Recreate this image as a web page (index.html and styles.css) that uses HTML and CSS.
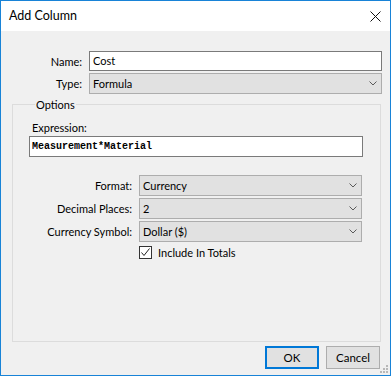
FILE: index.html
```html
<!DOCTYPE html>
<html lang="en">
<head>
    <meta charset="UTF-8">
    <meta name="viewport" content="width=device-width, initial-scale=1.0">
    <title>Add Column</title>
    <link rel="stylesheet" href="styles.css">
</head>
<body>
    <div class="window">
        <div class="titlebar">
            <span class="title">Add Column</span>
            <svg class="close" width="11" height="11" viewBox="0 0 11 11">
                <path d="M0.5 0.5 L10.5 10.5 M10.5 0.5 L0.5 10.5" stroke="#111" stroke-width="1" fill="none"/>
            </svg>
        </div>

        <div class="content">
            <div class="field-row">
                <label class="field-label">Name:</label>
                <div class="textbox wide">Cost</div>
            </div>
            <div class="field-row">
                <label class="field-label">Type:</label>
                <div class="combo wide">
                    <span>Formula</span>
                    <svg class="chevron" width="8" height="5" viewBox="0 0 8 5"><path d="M0.5 0.5 L4 4 L7.5 0.5" stroke="#5a5a5a" fill="none"/></svg>
                </div>
            </div>

            <fieldset class="options">
                <legend>Options</legend>
                <div class="expr-label">Expression:</div>
                <div class="textbox mono">Measurement*Material</div>

                <div class="opt-grid">
                    <label class="opt-label">Format:</label>
                    <div class="combo">
                        <span>Currency</span>
                        <svg class="chevron" width="8" height="5" viewBox="0 0 8 5"><path d="M0.5 0.5 L4 4 L7.5 0.5" stroke="#5a5a5a" fill="none"/></svg>
                    </div>
                    <label class="opt-label">Decimal Places:</label>
                    <div class="combo">
                        <span>2</span>
                        <svg class="chevron" width="8" height="5" viewBox="0 0 8 5"><path d="M0.5 0.5 L4 4 L7.5 0.5" stroke="#5a5a5a" fill="none"/></svg>
                    </div>
                    <label class="opt-label">Currency Symbol:</label>
                    <div class="combo">
                        <span>Dollar ($)</span>
                        <svg class="chevron" width="8" height="5" viewBox="0 0 8 5"><path d="M0.5 0.5 L4 4 L7.5 0.5" stroke="#5a5a5a" fill="none"/></svg>
                    </div>
                    <span></span>
                    <div class="check-row">
                        <span class="checkbox">
                            <svg width="11" height="11" viewBox="0 0 11 11"><path d="M1.5 5.5 L4 8.5 L9.5 1.5" stroke="#222" stroke-width="1" fill="none"/></svg>
                        </span>
                        <span>Include In Totals</span>
                    </div>
                </div>
            </fieldset>

            <div class="buttons">
                <button class="btn default">OK</button>
                <button class="btn">Cancel</button>
            </div>
        </div>

        <svg class="grip" width="9" height="9" viewBox="0 0 9 9">
            <rect x="6" y="0" width="2" height="2" fill="#b8b8b8"/>
            <rect x="3" y="3" width="2" height="2" fill="#b8b8b8"/>
            <rect x="6" y="3" width="2" height="2" fill="#b8b8b8"/>
            <rect x="0" y="6" width="2" height="2" fill="#b8b8b8"/>
            <rect x="3" y="6" width="2" height="2" fill="#b8b8b8"/>
            <rect x="6" y="6" width="2" height="2" fill="#b8b8b8"/>
        </svg>
    </div>
</body>
</html>
```

FILE: styles.css
```css
* {
    box-sizing: border-box;
}
body {
    margin: 0;
    font-family: Lato, "Noto Sans", sans-serif;
    font-size: 11px;
    color: #000;
}
.window {
    position: relative;
    width: 391px;
    height: 376px;
    border: 1px solid #1883d7;
    background: #f0f0f0;
    display: flex;
    flex-direction: column;
}
.titlebar {
    height: 30px;
    background: #fff;
    display: flex;
    align-items: center;
    justify-content: space-between;
    padding: 0 9px 0 8px;
}
.title {
    font-size: 12.5px;
    margin-top: -1px;
}
.content {
    flex: 1;
    padding: 20px 0 0 11px;
}
.field-row {
    display: flex;
    align-items: center;
    margin-bottom: 2px;
}
.field-row + .field-row {
    margin-top: 1px;
}
.field-label {
    width: 70px;
    text-align: right;
    margin-right: 7px;
}
.textbox {
    height: 20px;
    border: 1px solid #7a7a7a;
    background: #fff;
    padding: 0 3px;
    line-height: 18px;
}
.combo {
    height: 21px;
    border: 1px solid #adadad;
    background: #e1e1e1;
    padding: 0 4px 0 3px;
    display: flex;
    align-items: center;
    justify-content: space-between;
}
.wide {
    width: 293px;
}
.options {
    width: 369px;
    margin: 3px 0 0 0;
    padding: 0 17px 0 16px;
    height: 245px;
    border: 1px solid #dcdcdc;
}
.options legend {
    margin-left: 6px;
    padding: 0 1px;
    line-height: 15px;
}
.expr-label {
    margin: 8px 0 0 3px;
    line-height: 16px;
}
.mono {
    height: 21px;
    font-family: "Liberation Mono", monospace;
    font-weight: bold;
    font-size: 10px;
    line-height: 19px;
    padding-left: 2px;
}
.opt-grid {
    display: grid;
    grid-template-columns: 103px 223px;
    column-gap: 7px;
    row-gap: 2px;
    align-items: center;
    margin-top: 18px;
}
.opt-label {
    text-align: right;
}
.check-row {
    display: flex;
    align-items: center;
    gap: 6px;
    margin-top: 2px;
}
.checkbox {
    width: 13px;
    height: 13px;
    border: 1px solid #333;
    background: #fff;
    display: flex;
    align-items: center;
    justify-content: center;
}
.buttons {
    display: flex;
    justify-content: flex-end;
    gap: 7px;
    padding-right: 10px;
    margin-top: 4px;
}
.btn {
    width: 54px;
    height: 23px;
    font-family: inherit;
    font-size: 11.5px;
    color: #000;
    background: #e1e1e1;
    border: 1px solid #adadad;
    padding: 0;
}
.btn.default {
    border: 2px solid #0078d7;
}
.grip {
    position: absolute;
    right: 1px;
    bottom: 1px;
}
```
